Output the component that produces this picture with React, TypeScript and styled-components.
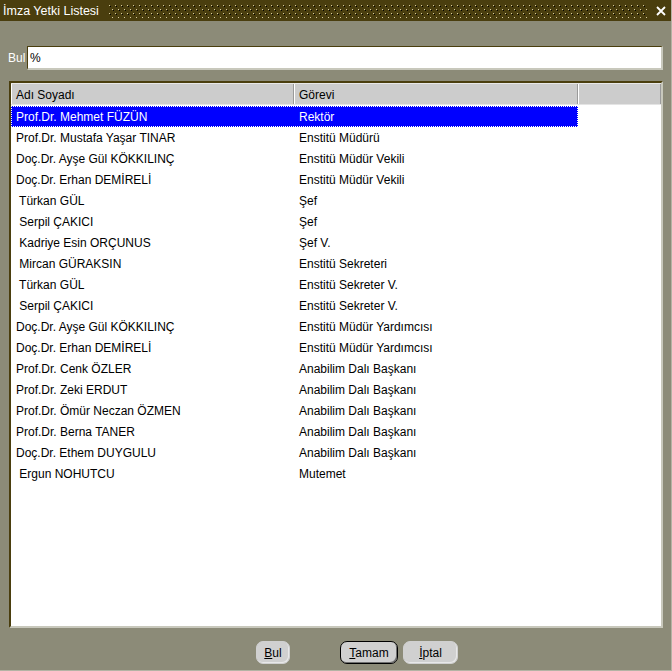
import React from 'react';
import styled, { createGlobalStyle } from 'styled-components';

const GlobalStyle = createGlobalStyle`
  html, body {
    margin: 0;
    padding: 0;
    background: #8c8b78;
  }
  * {
    box-sizing: border-box;
  }
`;

// Window frame and title bar
const Window = styled.div`
  width: 672px;
  height: 671px;
  background: #8c8b78;
  font-family: "Liberation Sans", Arial, sans-serif;
  font-size: 12px;
  border-right: 1px solid #b4b3a4;
  border-bottom: 1px solid #b4b3a4;
  display: flex;
  flex-direction: column;
  overflow: hidden;
`;

const TitleBar = styled.div`
  height: 21px;
  background: #4a3e0e;
  display: flex;
  align-items: center;
  padding: 0 4px 0 3px;
  color: #ffffff;
  flex-shrink: 0;
`;

const Title = styled.span`
  font-size: 12.5px;
  white-space: nowrap;
  margin-right: 9px;
`;

const Dots = styled.svg`
  flex: 1;
  height: 14px;
  margin-right: 8px;
`;

const CloseBox = styled.svg`
  width: 12px;
  height: 12px;
  flex-shrink: 0;
`;

const Content = styled.div`
  flex: 1;
  display: flex;
  flex-direction: column;
  padding: 25px 8px 0 8px;
`;

// Search line
const SearchRow = styled.div`
  display: flex;
  align-items: center;
  height: 24px;
`;

const SearchLabel = styled.label`
  width: 19px;
  color: #ffffff;
  font-size: 12px;
`;

const SearchInput = styled.div`
  flex: 1;
  height: 24px;
  background: #ffffff;
  border-top: 1px solid #4a3e0e;
  border-left: 1px solid #4a3e0e;
  border-right: 2px solid #c8c8bc;
  border-bottom: 2px solid #c8c8bc;
  padding: 3px 2px;
  color: #000;
  line-height: 16px;
`;

// List table
const Table = styled.div`
  margin: 11px 0 0 1px;
  height: 547px;
  background: #ffffff;
  border-top: 2px solid #4a3e0e;
  border-left: 2px solid #4a3e0e;
  border-right: 2px solid #c8c8bc;
  border-bottom: 2px solid #c8c8bc;
  display: flex;
  flex-direction: column;
`;

const Header = styled.div`
  display: grid;
  grid-template-columns: 283px 284px 1fr;
  height: 22px;
  background: #cccccc;
  border-top: 1px solid #e8e8e8;
  border-bottom: 1px solid #e4e4e4;
`;

const HeaderCell = styled.div`
  display: flex;
  align-items: center;
  padding: 2px 0 0 5px;
  color: #000;
  border-right: 1px solid #9a9a9a;
  box-shadow: inset 1px 0 0 #ffffff;
`;

const Rows = styled.div`
  display: flex;
  flex-direction: column;
  padding-top: 1px;
`;

const Row = styled.div`
  display: flex;
  height: 21px;
`;

const RowBody = styled.div<{ $selected?: boolean }>`
  width: 567px;
  display: grid;
  grid-template-columns: 283px 284px;
  background: ${p => (p.$selected ? '#0000ff' : 'transparent')};
  color: ${p => (p.$selected ? '#ffffff' : '#000000')};
  outline: ${p => (p.$selected ? '1px dotted #ffffff' : 'none')};
  outline-offset: -1px;
`;

const Cell = styled.div`
  display: flex;
  align-items: center;
  padding-left: 5px;
  white-space: pre;
`;

// Bottom buttons
const ButtonBar = styled.div`
  display: flex;
  align-items: center;
  height: 23px;
  margin-top: 13px;
  padding-left: 248px;
`;

const Button = styled.button<{ $default?: boolean; $width: number; $gap?: number }>`
  width: ${p => p.$width}px;
  height: 23px;
  margin-left: ${p => p.$gap || 0}px;
  background: #d0d0d0;
  border: 1px solid ${p => (p.$default ? '#000000' : '#d0d0d0')};
  border-radius: 7px;
  font-family: "Liberation Sans", Arial, sans-serif;
  font-size: 12px;
  color: #000;
  padding: 0;
  box-shadow: ${p => (p.$default ? 'inset -1px -1px 0 #707070' : 'inset -1px -1px 0 #e8e8e8')};
`;

const Key = styled.span`
  text-decoration: underline;
`;

const people: [string, string][] = [
  ['Prof.Dr. Mehmet FÜZÜN', 'Rektör'],
  ['Prof.Dr. Mustafa Yaşar TINAR', 'Enstitü Müdürü'],
  ['Doç.Dr. Ayşe Gül KÖKKILINÇ', 'Enstitü Müdür Vekili'],
  ['Doç.Dr. Erhan DEMİRELİ', 'Enstitü Müdür Vekili'],
  [' Türkan GÜL', 'Şef'],
  [' Serpil ÇAKICI', 'Şef'],
  [' Kadriye Esin ORÇUNUS', 'Şef V.'],
  [' Mircan GÜRAKSIN', 'Enstitü Sekreteri'],
  [' Türkan GÜL', 'Enstitü Sekreter V.'],
  [' Serpil ÇAKICI', 'Enstitü Sekreter V.'],
  ['Doç.Dr. Ayşe Gül KÖKKILINÇ', 'Enstitü Müdür Yardımcısı'],
  ['Doç.Dr. Erhan DEMİRELİ', 'Enstitü Müdür Yardımcısı'],
  ['Prof.Dr. Cenk ÖZLER', 'Anabilim Dalı Başkanı'],
  ['Prof.Dr. Zeki ERDUT', 'Anabilim Dalı Başkanı'],
  ['Prof.Dr. Ömür Neczan ÖZMEN', 'Anabilim Dalı Başkanı'],
  ['Prof.Dr. Berna TANER', 'Anabilim Dalı Başkanı'],
  ['Doç.Dr. Ethem DUYGULU', 'Anabilim Dalı Başkanı'],
  [' Ergun NOHUTCU', 'Mutemet'],
];

const App = () => {
  return (
    <Window>
      <GlobalStyle />
      <TitleBar>
        <Title>İmza Yetki Listesi</Title>
        <Dots>
          <defs>
            <pattern id="grip" width="6" height="8" patternUnits="userSpaceOnUse">
              <rect x="1" y="1" width="1" height="1" fill="#d8cca0" />
              <rect x="2" y="2" width="1" height="1" fill="#000000" />
              <rect x="4" y="5" width="1" height="1" fill="#d8cca0" />
              <rect x="5" y="6" width="1" height="1" fill="#000000" />
            </pattern>
          </defs>
          <rect x="0" y="0" width="100%" height="14" fill="url(#grip)" />
        </Dots>
        <CloseBox viewBox="0 0 12 12">
          <path d="M2 2 L10 10 M10 2 L2 10" stroke="#ffffff" strokeWidth="1.8" />
        </CloseBox>
      </TitleBar>
      <Content>
        <SearchRow>
          <SearchLabel>Bul</SearchLabel>
          <SearchInput>%</SearchInput>
        </SearchRow>
        <Table>
          <Header>
            <HeaderCell>Adı Soyadı</HeaderCell>
            <HeaderCell>Görevi</HeaderCell>
            <HeaderCell />
          </Header>
          <Rows>
            {people.map(([name, role], i) => (
              <Row key={i}>
                <RowBody $selected={i === 0}>
                  <Cell>{name}</Cell>
                  <Cell>{role}</Cell>
                </RowBody>
              </Row>
            ))}
          </Rows>
        </Table>
        <ButtonBar>
          <Button $width={34}>
            <Key>B</Key>ul
          </Button>
          <Button $width={58} $gap={50} $default>
            <Key>T</Key>amam
          </Button>
          <Button $width={55} $gap={5}>
            <Key>İ</Key>ptal
          </Button>
        </ButtonBar>
      </Content>
    </Window>
  );
};

export default App;
